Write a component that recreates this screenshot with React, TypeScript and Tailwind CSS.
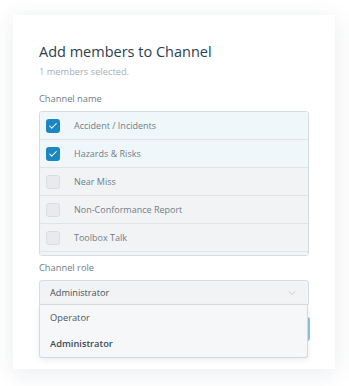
import { Check, ChevronDown } from "lucide-react"

const channels = [
  { name: "Accident / Incidents", checked: true },
  { name: "Hazards & Risks", checked: true },
  { name: "Near Miss", checked: false },
  { name: "Non-Conformance Report", checked: false },
  { name: "Toolbox Talk", checked: false },
]

function ChannelRow({ name, checked }: { name: string; checked: boolean }) {
  return (
    <div
      className={`flex h-[28px] shrink-0 items-center border-b border-[#dfe4e8] pl-[6px] ${
        checked ? "bg-[#eff7fb]" : "bg-[#f2f3f5]"
      }`}
    >
      <div
        className={`flex h-[14px] w-[14px] items-center justify-center rounded-[3px] ${
          checked ? "bg-[#1b87c2]" : "border border-[#d9dde1] bg-[#e8eaed]"
        }`}
      >
        {checked && <Check className="h-[10px] w-[10px] text-white" strokeWidth={2.5} />}
      </div>
      <span className="ml-[14px] text-[9px] text-[#717e89]">{name}</span>
    </div>
  )
}

export default function App() {
  return (
    <div className="min-h-[386px] bg-white pt-[15px] font-['Open_Sans',sans-serif]">
      <div className="mx-[13px] h-[354px] w-[322px] bg-white px-[26px] pt-[25px] shadow-[0_4px_22px_rgba(40,60,80,0.10)]">
        <h1 className="text-[14.5px] leading-[24px] text-[#2c3e4e]">Add members to Channel</h1>
        <p className="mt-[1px] text-[9.3px] leading-[14px] text-[#a5aeb6]">1 members selected.</p>

        <div className="mt-[13px] text-[9.3px] leading-[14px] text-[#6f7c87]">Channel name</div>
        <div className="mt-[5px] flex h-[145px] flex-col overflow-hidden rounded-[3px] border border-[#d5dde3]">
          {channels.map((c) => (
            <ChannelRow key={c.name} name={c.name} checked={c.checked} />
          ))}
          <div className="h-[28px] shrink-0 bg-[#f2f3f5]" />
        </div>

        <div className="mt-[5px] text-[9.3px] leading-[14px] text-[#6f7c87]">Channel role</div>
        <div className="relative mt-[5px]">
          <div className="flex h-[25px] items-center justify-between rounded-t-[3px] border border-[#d8dde2] bg-[#f2f3f5] px-[10px]">
            <span className="text-[9.2px] text-[#44525e]">Administrator</span>
            <ChevronDown className="h-[12px] w-[12px] text-[#a9b2ba]" strokeWidth={1.2} />
          </div>
          <div className="mt-[12px] -mr-px h-[24px] rounded-[3px] bg-[#8fc3dd]" />
          <div className="absolute left-0 top-[25px] z-10 w-[269px] rounded-b-[3px] border border-t-0 border-[#d3d9de] bg-[#f6f7f8] shadow-[0_2px_6px_rgba(0,0,0,0.08)]">
            <div className="flex h-[26px] items-center px-[10px] text-[9.3px] text-[#4a5864]">Operator</div>
            <div className="flex h-[26px] items-center px-[10px] text-[9.3px] font-semibold text-[#3b4957]">
              Administrator
            </div>
          </div>
        </div>
      </div>
    </div>
  )
}
